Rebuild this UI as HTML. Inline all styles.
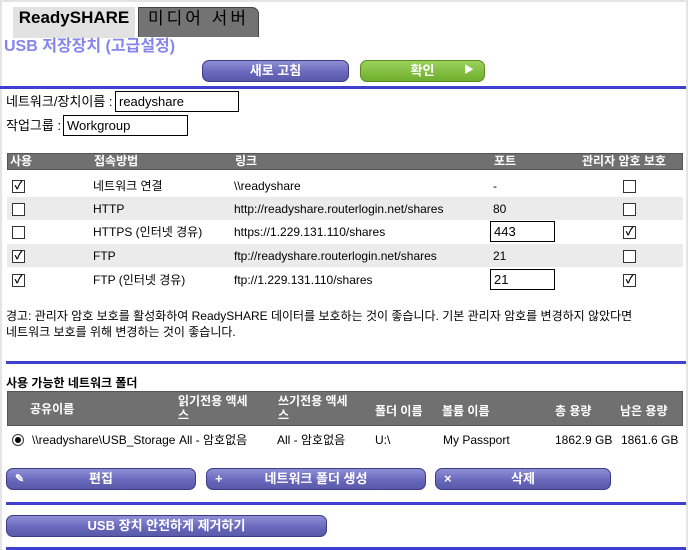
<!DOCTYPE html>
<html><head><meta charset="utf-8"><style>
*{margin:0;padding:0;box-sizing:border-box}
body{width:688px;height:550px;overflow:hidden;background:#e4e4e4;font-family:"Liberation Sans","Noto Sans CJK KR","NanumGothic",sans-serif;font-size:12px;line-height:14px;color:#000;position:relative}
.page{position:absolute;left:2px;top:2px;width:684px;height:548px;background:#fff}
.a{position:absolute;white-space:nowrap}
.tab1{position:absolute;left:11px;top:5px;width:122px;height:31px;background:#e2e2e2;font-weight:bold;font-size:17px;text-align:center;line-height:22px}
.tab2{position:absolute;left:136px;top:5px;width:121px;height:30px;background:#737373;border:1px solid #444;border-bottom:none;border-radius:0 7px 0 0;font-size:17px;text-align:center;line-height:22px;color:#000;letter-spacing:3px}
.btn{position:absolute;height:22px;border-radius:7px;background:linear-gradient(#8f8fd6,#6666bb 60%,#5a5aa8);border:1px solid #3a3a8a;color:#fff;font-weight:bold;font-size:13px;text-align:center;line-height:20px}
.g{background:linear-gradient(#9ad25a,#6fae2e);border-color:#5a8a22}
.line{position:absolute;height:3px;background:#4040d0}
.inp{position:absolute;border:1px solid #000;height:21px;font-size:13px;line-height:19px;padding-left:3px;background:#fff}
.hdr{position:absolute;background:#707070;border:1px solid #555;color:#fff;font-weight:bold}
.row{position:absolute;left:5px;width:676px;height:23px}
.row .a{line-height:14px}
.cb{position:absolute;width:13px;height:13px;border:1px solid #333;background:#fff;font-size:11px;line-height:11px;text-align:center;font-weight:bold}
</style></head><body><div class="page">
<div class="tab1">ReadySHARE</div>
<div class="tab2">미디어 서버</div>
<div class="a" style="left:2px;top:36px;font-size:16px;line-height:18px;font-weight:bold;color:#8585ee">USB 저장장치 (고급설정)</div>
<div class="btn" style="left:200px;top:58px;width:147px">새로 고침</div>
<div class="btn g" style="left:358px;top:58px;width:125px">확인<span style="position:absolute;right:10px;font-size:10px">▶</span></div>
<div class="line" style="left:-2px;top:84px;width:686px"></div>
<div class="a" style="left:4px;top:92px;font-size:13px;line-height:15px">네트워크/장치이름 :</div>
<div class="inp" style="left:113px;top:89px;width:124px">readyshare</div>
<div class="a" style="left:4px;top:116px;font-size:13px;line-height:15px">작업그룹 :</div>
<div class="inp" style="left:61px;top:113px;width:125px">Workgroup</div>
<div class="hdr" style="left:5px;top:151px;width:676px;height:17px;line-height:15px">
<span class="a" style="left:2px;top:0">사용</span><span class="a" style="left:86px;top:0">접속방법</span><span class="a" style="left:227px;top:0">링크</span><span class="a" style="left:486px;top:0">포트</span><span class="a" style="left:574px;top:0">관리자 암호 보호</span></div>
<div class="row" style="top:172px"><div class="cb" style="left:5px;top:6px">✓</div><span class="a" style="left:86px;top:5px">네트워크 연결</span><span class="a" style="left:227px;top:5px">\\readyshare</span><span class="a" style="left:486px;top:5px">-</span><div class="cb" style="left:616px;top:6px"></div></div>
<div class="row" style="top:195px;background:#ebebeb"><div class="cb" style="left:5px;top:6px"></div><span class="a" style="left:86px;top:5px">HTTP</span><span class="a" style="left:227px;top:5px">http://readyshare.routerlogin.net/shares</span><span class="a" style="left:486px;top:5px">80</span><div class="cb" style="left:616px;top:6px"></div></div>
<div class="row" style="top:218px"><div class="cb" style="left:5px;top:6px"></div><span class="a" style="left:86px;top:5px">HTTPS (인터넷 경유)</span><span class="a" style="left:227px;top:5px">https://1.229.131.110/shares</span><div class="inp" style="left:483px;top:1px;width:65px">443</div><div class="cb" style="left:616px;top:6px">✓</div></div>
<div class="row" style="top:242px;background:#ebebeb"><div class="cb" style="left:5px;top:6px">✓</div><span class="a" style="left:86px;top:5px">FTP</span><span class="a" style="left:227px;top:5px">ftp://readyshare.routerlogin.net/shares</span><span class="a" style="left:486px;top:5px">21</span><div class="cb" style="left:616px;top:6px"></div></div>
<div class="row" style="top:266px"><div class="cb" style="left:5px;top:6px">✓</div><span class="a" style="left:86px;top:5px">FTP (인터넷 경유)</span><span class="a" style="left:227px;top:5px">ftp://1.229.131.110/shares</span><div class="inp" style="left:483px;top:1px;width:65px">21</div><div class="cb" style="left:616px;top:6px">✓</div></div>
<div class="a" style="left:4px;top:306px;line-height:16px">경고: 관리자 암호 보호를 활성화하여 ReadySHARE 데이터를 보호하는 것이 좋습니다. 기본 관리자 암호를 변경하지 않았다면<br>네트워크 보호를 위해 변경하는 것이 좋습니다.</div>
<div class="line" style="left:4px;top:359px;width:680px"></div>
<div class="a" style="left:4px;top:374px;font-weight:bold">사용 가능한 네트워크 폴더</div>
<div class="hdr" style="left:5px;top:389px;width:676px;height:35px;line-height:14px">
<span class="a" style="left:22px;top:10px">공유이름</span><span class="a" style="left:170px;top:2px">읽기전용 액세<br>스</span><span class="a" style="left:270px;top:2px">쓰기전용 액세<br>스</span><span class="a" style="left:367px;top:12px">폴더 이름</span><span class="a" style="left:434px;top:12px">볼륨 이름</span><span class="a" style="left:547px;top:12px">총 용량</span><span class="a" style="left:612px;top:12px">남은 용량</span></div>
<div class="a" style="left:10px;top:432px;width:12px;height:12px;border:1px solid #333;border-radius:50%;background:#fff"><div style="position:absolute;left:2px;top:2px;width:6px;height:6px;border-radius:50%;background:#000"></div></div>
<div class="a" style="left:30px;top:431px">\\readyshare\USB_Storage</div>
<div class="a" style="left:177px;top:431px">All - 암호없음</div>
<div class="a" style="left:275px;top:431px">All - 암호없음</div>
<div class="a" style="left:373px;top:431px">U:\</div>
<div class="a" style="left:441px;top:431px">My Passport</div>
<div class="a" style="left:553px;top:431px">1862.9 GB</div>
<div class="a" style="left:619px;top:431px">1861.6 GB</div>
<div class="btn" style="left:4px;top:466px;width:190px"><span style="position:absolute;left:8px;font-size:11px">✎</span>편집</div>
<div class="btn" style="left:204px;top:466px;width:220px"><span style="position:absolute;left:8px">+</span>네트워크 폴더 생성</div>
<div class="btn" style="left:433px;top:466px;width:176px"><span style="position:absolute;left:8px">×</span>삭제</div>
<div class="line" style="left:4px;top:500px;width:680px"></div>
<div class="btn" style="left:4px;top:513px;width:321px">USB 장치 안전하게 제거하기</div>
<div class="line" style="left:4px;top:545px;width:680px"></div>
</div></body></html>
